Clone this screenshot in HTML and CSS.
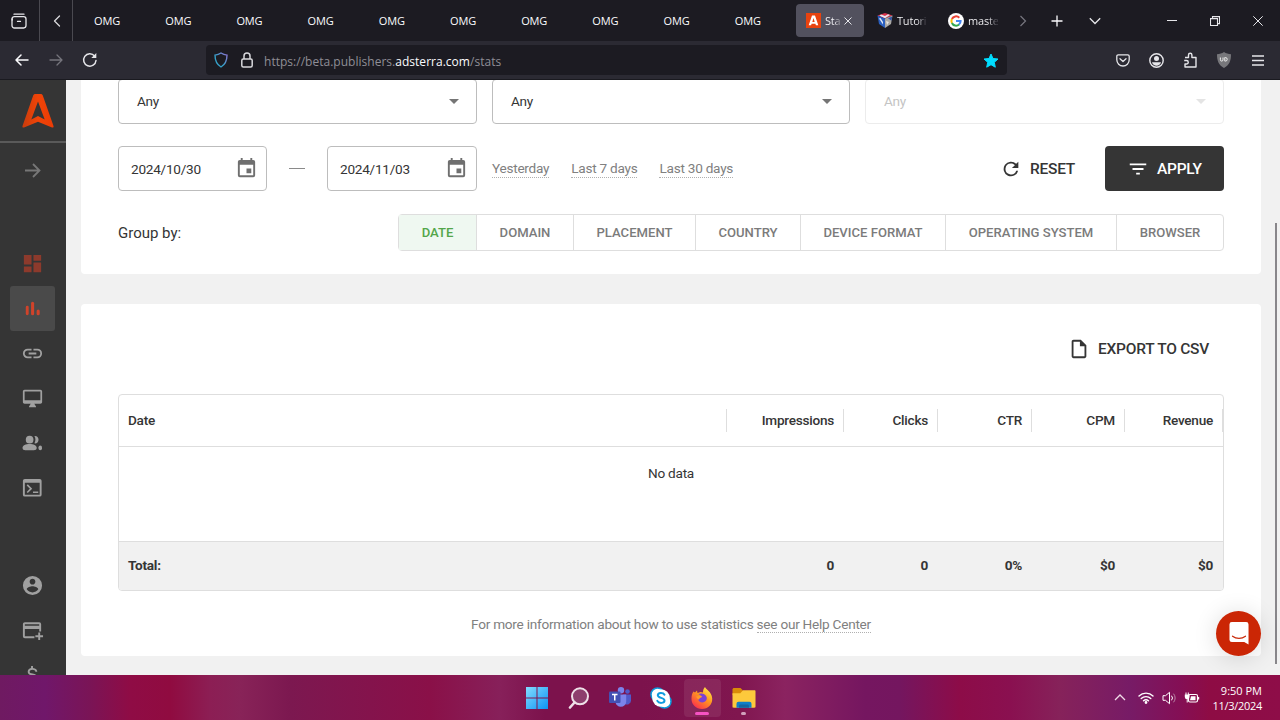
FILE: index.html
```html
<!DOCTYPE html>
<html lang="en">
<head>
    <meta charset="UTF-8">
    <meta name="viewport" content="width=device-width, initial-scale=1.0">
    <title>Statistics</title>
    <link rel="stylesheet" href="styles.css">
</head>
<body>
    <!-- Browser tabs -->
    <div class="tab-bar">
        <div class="tab-tool tool-box">
            <svg width="16" height="16" viewBox="0 0 16 16" fill="none" stroke="#e6e6ea" stroke-width="1.3" stroke-linecap="round"><path d="M3 1.2h10"/><rect x="1" y="3.6" width="14" height="11.4" rx="2.4"/><path d="M1.2 7V6M6.5 8.4h3"/></svg>
        </div>
        <div class="tab-tool tool-back">
            <svg width="8" height="12" viewBox="0 0 8 12" fill="none" stroke="#d8d8dc" stroke-width="1.3" stroke-linecap="round" stroke-linejoin="round"><path d="M6.5 1L1.5 6l5 5"/></svg>
        </div>
        <div class="tabs">
            <span class="tab">OMG</span>
            <span class="tab">OMG</span>
            <span class="tab">OMG</span>
            <span class="tab">OMG</span>
            <span class="tab">OMG</span>
            <span class="tab">OMG</span>
            <span class="tab">OMG</span>
            <span class="tab">OMG</span>
            <span class="tab">OMG</span>
            <span class="tab">OMG</span>
        </div>
        <div class="tab-active">
            <svg width="15" height="15" viewBox="0 0 15 15"><rect width="15" height="15" fill="#e8430f"/><path d="M6 2.500h3L12.300 12.300H9.900l-.5-1.600H5.600l-.5 1.600H2.700z" fill="#fff"/><path d="M7.500 5l1.200 4H6.300z" fill="#e8430f"/></svg>
            <span class="tab-title short">Sta</span>
            <svg width="8" height="8" viewBox="0 0 8 8" stroke="#e6e6ea" stroke-width="1"><path d="M.5.5l7 7M7.500.5l-7 7"/></svg>
        </div>
        <div class="tab-icon">
            <svg width="16" height="15" viewBox="0 0 16 15"><path d="M8 0l7.500 2.500L8 5.500.5 2.500z" fill="#d8324a"/><path d="M4 1.500l4 1.400 3-1.600 2 .6-5 3.400-5.500-2.600z" fill="#e4e6ee"/><path d="M.5 2.500L8 5.500V15l-6-4z" fill="#2a5fc0"/><path d="M2 5.500l4 6V9L3.500 5z" fill="#dfe8f6"/><path d="M15.500 2.500L8 5.500V15l6-4z" fill="#a9a8a6"/><path d="M15.300 3.500L11 5.200l3.500 2.500z" fill="#3554a0"/><path d="M9 8l3 1-2 3z" fill="#e6e4df"/></svg>
            <span class="tab-title">Tutori</span>
        </div>
        <div class="tab-icon">
            <svg width="16" height="16" viewBox="0 0 16 16" fill="none" stroke-width="2"><circle cx="8" cy="8" r="8" fill="#fff"/><path d="M11.300 4.700A4.600 4.600 0 0 0 3.900 6" stroke="#ea4335"/><path d="M3.900 6a4.600 4.600 0 0 0 0 4" stroke="#fbbc05"/><path d="M3.900 10a4.600 4.600 0 0 0 7.200 1.500" stroke="#34a853"/><path d="M11 11.500A4.600 4.600 0 0 0 12.600 8H8" stroke="#4285f4"/></svg>
            <span class="tab-title">maste</span>
        </div>
        <div class="tab-controls">
            <svg width="8" height="12" viewBox="0 0 8 12" fill="none" stroke="#77767f" stroke-width="1.2"><path d="M1.500 1l5 5-5 5"/></svg>
            <svg width="12" height="12" viewBox="0 0 12 12" stroke="#fbfbfe" stroke-width="1.300"><path d="M6 .5v11M.5 6h11"/></svg>
            <svg width="12" height="8" viewBox="0 0 12 8" fill="none" stroke="#e6e6ea" stroke-width="1.300"><path d="M.8 1.300L6 6.500l5.200-5.200"/></svg>
        </div>
        <div class="window-controls">
            <svg width="10" height="10" viewBox="0 0 10 10" stroke="#e6e6ea"><path d="M0 4.500h10"/></svg>
            <svg width="10" height="10" viewBox="0 0 10 10" fill="none" stroke="#e6e6ea" stroke-width="1.100"><path d="M.5 2.600h7v7h-7z"/><path d="M2.500 2.500V.6h7v7h-2"/></svg>
            <svg width="10" height="10" viewBox="0 0 10 10" stroke="#e6e6ea"><path d="M.3.3l9.400 9.400M9.700.3L.3 9.700"/></svg>
        </div>
    </div>

    <!-- Browser toolbar -->
    <div class="toolbar">
        <div class="nav-buttons">
            <svg width="14" height="12" viewBox="0 0 14 12" fill="none" stroke="#fbfbfe" stroke-width="1.500" stroke-linecap="round" stroke-linejoin="round"><path d="M13 6H1M6 1L1 6l5 5"/></svg>
            <svg width="14" height="12" viewBox="0 0 14 12" fill="none" stroke="#75747c" stroke-width="1.300" stroke-linecap="round" stroke-linejoin="round"><path d="M1 6h12M8 1l5 5-5 5"/></svg>
            <svg width="16" height="16" viewBox="0 0 16 16" fill="none" stroke="#e6e6ea" stroke-width="1.500" stroke-linecap="round"><path d="M14 8.500A6.200 6.200 0 1 1 12.600 4"/><path d="M14.300 1v5H9.300z" fill="#e6e6ea" stroke="none"/></svg>
        </div>
        <div class="url-bar">
            <svg width="14" height="16" viewBox="0 0 14 16" fill="none" stroke-width="1.400"><defs><linearGradient id="shield" x1="0" y1="1" x2="1" y2="0"><stop offset="0.400" stop-color="#35a0c8"/><stop offset="1" stop-color="#9070d0"/></linearGradient></defs><path d="M7 1c2 1.300 4 1.900 6 2.100C13 8.500 11.500 12.500 7 15 2.500 12.500 1 8.500 1 3.100 3 2.900 5 2.300 7 1z" stroke="url(#shield)"/></svg>
            <svg class="lock" width="12" height="16" viewBox="0 0 12 16" fill="none" stroke="#d8d8dc" stroke-width="1.500"><rect x=".8" y="7" width="10.400" height="8" rx="1.500"/><path d="M3 7V4a3 3 0 0 1 6 0v3"/></svg>
            <span class="url">https://beta.publishers.<b>adsterra.com</b>/stats</span>
            <svg width="16" height="15" viewBox="0 0 16 15" fill="#00ddff" stroke="#00ddff" stroke-linejoin="round"><path d="M8 1l2 4.500 5 .5-3.700 3.300 1 4.900L8 11.700l-4.300 2.500 1-4.900L1 6l5-.5z"/></svg>
        </div>
        <div class="toolbar-icons">
            <svg width="14" height="13" viewBox="0 0 14 13" fill="none" stroke="#e6e6ea" stroke-width="1.300" stroke-linecap="round" stroke-linejoin="round"><path d="M2.200.8h9.600c.8 0 1.400.6 1.400 1.400v3.600a6.200 6.200 0 0 1-12.400 0V2.200C.8 1.400 1.400.8 2.200.8z"/><path d="M4 4.800l3 2.800 3-2.800"/></svg>
            <svg width="15" height="15" viewBox="0 0 15 15"><circle cx="7.500" cy="7.500" r="6.700" fill="none" stroke="#e6e6ea" stroke-width="1.400"/><circle cx="7.500" cy="5.500" r="2.500" fill="#e6e6ea"/><path d="M3 9.200h9c-.5 2.200-2.400 3.600-4.500 3.600S3.500 11.400 3 9.200z" fill="#e6e6ea"/></svg>
            <svg width="15" height="16" viewBox="0 0 15 16" fill="none" stroke="#e6e6ea" stroke-width="1.400" stroke-linejoin="round"><path d="M2 5.500h3.500V3a1.700 1.700 0 0 1 3.400 0v2.500H13V15H2v-3h1.500a1.600 1.600 0 0 0 0-3.500H1.200"/></svg>
            <svg width="14" height="16" viewBox="0 0 14 16"><path d="M7 0c2 1.400 4.500 2 7 2.200C14 8.500 12.500 13 7 16 1.500 13 0 8.500 0 2.200 2.500 2 5 1.400 7 0z" fill="#77777b"/><path d="M3.400 5.500v2.300a1.300 1.300 0 0 0 2.600 0V5.500M7.800 5.500v3.600h.6a1.800 1.800 0 0 0 0-3.600z" fill="none" stroke="#eee"/></svg>
            <svg class="hamburger" width="12" height="11" viewBox="0 0 12 11" stroke="#e6e6ea" stroke-width="1.300"><path d="M0 1h12M0 5.500h12M0 10h12"/></svg>
        </div>
    </div>

    <!-- Site -->
    <div class="page">
        <aside class="sidebar">
            <div class="logo">
                <svg width="32" height="34" viewBox="0 0 32 34"><defs><linearGradient id="logo" x1="0" y1="0" x2="1" y2="0"><stop offset="0" stop-color="#c93c0c"/><stop offset="0.500" stop-color="#f04408"/><stop offset="1" stop-color="#ea3c06"/></linearGradient></defs><path fill="url(#logo)" fill-rule="evenodd" d="M13.500 0h5c1.300 0 2 .6 2.400 1.700L31.500 32c.3 1.200-.4 1.900-1.500 1.500l-14-5.700L2 33.500c-1.100.4-1.800-.3-1.500-1.500L11.100 1.700C11.500.6 12.200 0 13.500 0zM16 7.500L9.300 25.500 16 22l6.700 3.500z"/></svg>
            </div>
            <div class="expand">
                <svg width="16" height="15" viewBox="0 0 16 15" fill="none" stroke="#777" stroke-width="1.800"><path d="M0 7.500h14M8 1l6.500 6.500L8 14"/></svg>
            </div>
            <nav class="menu">
                <a class="menu-item home"><svg viewBox="0 0 24 24"><path d="M13 3v6h8V3M13 21h8V11h-8M3 21h8v-6H3M3 13h8V3H3z"/></svg></a>
                <a class="menu-item active"><svg viewBox="0 0 24 24"><rect x="5" y="9" width="3" height="10" rx="1.500"/><rect x="10.500" y="5" width="3.200" height="14" rx="1.600"/><rect x="16.300" y="13" width="3.200" height="6" rx="1.600"/></svg></a>
                <a class="menu-item"><svg viewBox="0 0 24 24"><path d="M3.900 12c0-1.710 1.390-3.100 3.100-3.100h4V7H7a5 5 0 0 0 0 10h4v-1.900H7c-1.710 0-3.100-1.390-3.100-3.100M8 13h8v-2H8v2m9-6h-4v1.900h4a3.100 3.100 0 0 1 0 6.200h-4V17h4a5 5 0 0 0 0-10z"/></svg></a>
                <a class="menu-item"><svg class="small" viewBox="0 0 24 24"><path d="M21 2H3c-1.100 0-2 .9-2 2v12c0 1.100.9 2 2 2h7l-2 3v1h8v-1l-2-3h7c1.100 0 2-.9 2-2V4c0-1.100-.9-2-2-2zm0 12H3V4h18v10z"/></svg></a>
                <a class="menu-item"><svg viewBox="0 0 24 24"><circle cx="9" cy="8" r="4"/><path d="M4.500 19C3 19 1.600 18.500 1.600 16.500c0-2.500 3.400-3.900 7.400-3.900s7.400 1.400 7.400 3.900c0 2-1.400 2.500-2.900 2.500zM14 4.200c2.300-.5 4.300 1.400 4.300 3.800s-2 4.300-4.300 3.800c1.400-2.300 1.400-5.300 0-7.600z"/><rect x="18.300" y="14" width="3.600" height="5" rx="1.800"/></svg></a>
                <a class="menu-item"><svg viewBox="0 0 24 24"><path fill-rule="evenodd" d="M4 3h15.500a2 2 0 0 1 2 2v14.500a2 2 0 0 1-2 2H4a2 2 0 0 1-2-2V5a2 2 0 0 1 2-2zm0 4v12.500h15.500V7z"/><path d="M6.500 9.200l4 4-4 4M12.500 17H18" fill="none" stroke="#a0a0a0" stroke-width="1.700"/></svg></a>
                <a class="menu-item account"><svg viewBox="0 0 24 24"><path d="M12 2a10 10 0 1 0 0 20 10 10 0 0 0 0-20zm0 3c1.660 0 3 1.340 3 3s-1.340 3-3 3-3-1.340-3-3 1.340-3 3-3zm0 14.200c-2.500 0-4.710-1.280-6-3.220.03-1.990 4-3.080 6-3.080s5.970 1.090 6 3.080c-1.290 1.940-3.500 3.220-6 3.220z"/></svg></a>
                <a class="menu-item"><svg viewBox="0 0 24 24"><path d="M4 3.500h15a2 2 0 0 1 2 2V13h-2v-2.500H4V18h10v2H4a2 2 0 0 1-2-2V5.500c0-1.100.9-2 2-2zm0 2V7h15V5.500zM18 14h2v3h3v2h-3v3h-2v-3h-3v-2h3z" fill-rule="evenodd"/></svg></a>
                <a class="menu-item dollar"><svg viewBox="0 0 24 24"><path d="M7 15h2c0 1.080 1.370 2 3 2s3-.92 3-2c0-1.100-1.040-1.500-3.240-2.030C9.640 12.440 7 11.780 7 9c0-1.790 1.470-3.310 3.500-3.820V3h2v2.180C15.530 5.690 17 7.210 17 9h-2c0-1.080-1.370-2-3-2s-3 .92-3 2c0 1.100 1.040 1.500 3.240 2.030C14.360 11.560 17 12.220 17 15c0 1.790-1.470 3.310-3.500 3.820V21h-3v-2.180C8.470 18.310 7 16.790 7 15z"/></svg></a>
            </nav>
        </aside>

        <main class="content">
            <section class="card filters">
                <div class="select-row">
                    <div class="select"><span>Any</span><i class="caret"></i></div>
                    <div class="select"><span>Any</span><i class="caret"></i></div>
                    <div class="select disabled"><span>Any</span><i class="caret"></i></div>
                </div>
                <div class="date-row">
                    <div class="date-input from"><span>2024/10/30</span><svg viewBox="0 0 24 24"><path d="M19 19H5V8h14M16 1v2H8V1H6v2H5a2 2 0 0 0-2 2v14a2 2 0 0 0 2 2h14a2 2 0 0 0 2-2V5a2 2 0 0 0-2-2h-1V1M17 12h-5v5h5v-5z"/></svg></div>
                    <span class="dash"></span>
                    <div class="date-input"><span>2024/11/03</span><svg viewBox="0 0 24 24"><path d="M19 19H5V8h14M16 1v2H8V1H6v2H5a2 2 0 0 0-2 2v14a2 2 0 0 0 2 2h14a2 2 0 0 0 2-2V5a2 2 0 0 0-2-2h-1V1M17 12h-5v5h5v-5z"/></svg></div>
                    <div class="presets">
                        <a class="dotted">Yesterday</a>
                        <a class="dotted">Last 7 days</a>
                        <a class="dotted">Last 30 days</a>
                    </div>
                    <button class="btn reset"><svg viewBox="0 0 24 24"><path d="M17.650 6.350A8 8 0 1 0 19.730 14h-2.080A6 6 0 1 1 12 6c1.660 0 3.140.69 4.220 1.780L13 11h7V4l-2.350 2.350z"/></svg>RESET</button>
                    <button class="btn apply"><svg viewBox="0 0 24 24"><path d="M6 13h12v-2H6M3 6v2h18V6M10 18h4v-2h-4v2z"/></svg>APPLY</button>
                </div>
                <div class="group-row">
                    <span class="group-label">Group by:</span>
                    <div class="group-buttons">
                        <button class="group-btn g-date selected">DATE</button>
                        <button class="group-btn g-domain">DOMAIN</button>
                        <button class="group-btn g-placement">PLACEMENT</button>
                        <button class="group-btn g-country">COUNTRY</button>
                        <button class="group-btn g-format">DEVICE FORMAT</button>
                        <button class="group-btn g-system">OPERATING SYSTEM</button>
                        <button class="group-btn g-browser">BROWSER</button>
                    </div>
                </div>
            </section>

            <section class="card report">
                <button class="btn export"><svg viewBox="0 0 24 24"><path d="M14 2H6c-1.100 0-2 .9-2 2v16c0 1.100.9 2 2 2h12c1.100 0 2-.9 2-2V8l-6-6zM6 20V4h7v5h5v11H6z"/></svg>EXPORT TO CSV</button>
                <div class="table">
                    <div class="table-row table-head">
                        <span>Date</span><span>Impressions</span><span>Clicks</span><span>CTR</span><span>CPM</span><span>Revenue</span>
                    </div>
                    <div class="table-empty">No data</div>
                    <div class="table-row table-total">
                        <span>Total:</span><span>0</span><span>0</span><span>0%</span><span>$0</span><span>$0</span>
                    </div>
                </div>
                <p class="help">For more information about how to use statistics <a class="dotted">see our Help Center</a></p>
            </section>
        </main>
        <div class="scrollbar"></div>
        <div class="chat">
            <svg width="20" height="23" viewBox="0 0 21 24"><path d="M3 0h15a2.500 2.500 0 0 1 2.500 2.500V23.500L16 21H3a2.500 2.500 0 0 1-2.500-2.500v-16A2.500 2.500 0 0 1 3 0z" fill="#fff"/><path d="M3.700 14.800c4 3.200 9.600 3.200 13.600 0" fill="none" stroke="#c92a0a" stroke-width="1.300" stroke-linecap="round"/></svg>
        </div>
    </div>

    <!-- Taskbar -->
    <footer class="taskbar">
        <div class="apps">
            <div class="app">
                <svg width="22" height="22" viewBox="0 0 22 22"><defs><linearGradient id="win" x1="0" y1="0" x2="1" y2="1"><stop offset="0" stop-color="#84dcff"/><stop offset="1" stop-color="#0c94f4"/></linearGradient></defs><path fill="url(#win)" d="M0 0h10.500v10.500H0zM11.500 0H22v10.500H11.500zM0 11.500h10.500V22H0zM11.500 11.500H22V22H11.500z"/></svg>
            </div>
            <div class="app">
                <svg width="22" height="22" viewBox="0 0 22 22"><circle cx="12" cy="9.300" r="8" fill="#8d3e6d" stroke="#eee0e8" stroke-width="2"/><path d="M6.500 15.500L2 20.500" stroke="#eee0e8" stroke-width="2.600" stroke-linecap="round"/></svg>
            </div>
            <div class="app">
                <svg width="24" height="20" viewBox="0 0 24 20"><circle cx="19.500" cy="4.500" r="2.300" fill="#5059c9"/><path d="M15 7.500h8v6a4 4 0 0 1-6 3.400z" fill="#5059c9"/><circle cx="13" cy="3.200" r="3.200" fill="#7b83eb"/><path d="M7.500 7.500h10.700v7a5.300 5.300 0 0 1-10.700 0z" fill="#7b83eb"/><rect x="1" y="4.500" width="11.500" height="11.500" rx="1" fill="#4350b4"/><path d="M4 7.500h5.500M6.750 7.500v6" stroke="#fff" stroke-width="1.500"/></svg>
            </div>
            <div class="app">
                <svg width="22" height="22" viewBox="0 0 22 22"><circle cx="7.500" cy="7.500" r="6.500" fill="#fff" stroke="#0d9bdc" stroke-width="1.500"/><circle cx="14.500" cy="14.500" r="6.500" fill="#fff" stroke="#0d9bdc" stroke-width="1.500"/><circle cx="11" cy="11" r="8.800" fill="#fff"/><path d="M14.500 7.700c-1.300-2.400-6.700-2.300-6.700.6 0 3.200 6.700 2 6.700 5.200 0 3-5.700 3.200-7.200.4" fill="none" stroke="#109ce0" stroke-width="2" stroke-linecap="round"/></svg>
            </div>
            <div class="app running">
                <svg width="22" height="22" viewBox="0 0 22 22"><defs><linearGradient id="fox" x1="0.900" y1="0" x2="0.200" y2="1"><stop offset="0" stop-color="#fff44f"/><stop offset="0.450" stop-color="#ff9a1f"/><stop offset="1" stop-color="#fb2a50"/></linearGradient></defs><path fill="url(#fox)" d="M14 0c1 3 6.800 4.500 7.200 11.500C21.500 17.500 17 22 11 22S.5 17.500.5 12C.5 8.500 1 6.500 2.500 4.500L4 5.500l2-2 .5 2.500 3-1 2.500.5c0-2.200.5-4 2-5.500z"/><path d="M7.500 7c2-1 7.300-.8 8.200 3.600.8 4-4.200 6.400-7.200 3.900-1.300-1.100-1.600-2.200-1-3.500l3-.7-.9-1.800z" fill="#7a42d4"/><path d="M5 9.500l4.500-.8c1 .2 1.700.8 1.700 1.300-1.700.3-3 1.200-3.200 2.800-1-.6-2.200-1.700-3-3.300z" fill="#ff9b2a"/></svg>
            </div>
            <div class="app opened">
                <svg width="24" height="22" viewBox="0 0 24 22"><path d="M2 1h6.500L11 3.500V8H.5V2.500C.5 1.700 1.200 1 2 1z" fill="#d98b08"/><path d="M11 3.200h11.500c.6 0 1 .4 1 1v15.300c0 .8-.4 1.200-1.200 1.200H1.700c-.8 0-1.200-.4-1.200-1.200V6.200h7.800z" fill="#fdc93c"/><path d="M6.500 14.700h11a2 2 0 0 1 2 2v4h-15v-4a2 2 0 0 1 2-2z" fill="#0f7fc8"/><path d="M8.500 17.500h7c.8 0 1.500.7 1.500 1.500v1.700H7V19c0-.8.700-1.500 1.500-1.500z" fill="#1465a0"/></svg>
            </div>
        </div>
        <div class="tray">
            <svg width="12" height="7" viewBox="0 0 12 7" fill="none" stroke="#f0dce8" stroke-width="1.300"><path d="M1 6l5-5 5 5"/></svg>
            <svg width="16" height="12" viewBox="0 0 16 12" fill="none" stroke="#fff" stroke-width="1.400" stroke-linecap="round"><path d="M1 4a10 10 0 0 1 14 0M3.200 6.500a7 7 0 0 1 9.600 0M5.500 8.700a4 4 0 0 1 5 0"/><circle cx="8" cy="10.500" r=".7" fill="#fff"/></svg>
            <svg width="15" height="14" viewBox="0 0 15 14" fill="none" stroke="#fff"><path d="M1 4.700h2.500L7.500 1.300v11.400L3.500 9.300H1z"/><path d="M9.500 4.700a3.500 3.500 0 0 1 0 4.600"/><path d="M11.500 2.700a6.500 6.500 0 0 1 0 8.600" stroke="#b984a4"/></svg>
            <svg width="16" height="12" viewBox="0 0 16 12"><rect x="4.500" y="2.500" width="9" height="7.500" rx="1.500" fill="none" stroke="#fff" stroke-width="1.200"/><path d="M7 4.300h4.500v4H6zM14 5h1.200v2.600H14z" fill="#fff"/><path d="M.8 2.500h4.700V5a2.300 2.300 0 0 1-4.700 0zM1.500.5h1v2h-1zM3.800.5h1v2h-1zM2.700 7h1v3.500h-1z" fill="#fff"/></svg>
        </div>
        <div class="clock"><span class="time">9:50 PM</span><span>11/3/2024</span></div>
    </footer>
</body>
</html>
```
FILE: styles.css
```css
/* General Styles */
* {
    box-sizing: border-box;
}

body {
    margin: 0;
    width: 1280px;
    height: 720px;
    overflow: hidden;
    display: flex;
    flex-direction: column;
    font-family: Roboto, Arial, sans-serif;
    font-size: 13.6px;
    color: #353535;
}

svg {
    display: block;
    flex-shrink: 0;
}

button {
    font-family: inherit;
    border: none;
    background: none;
    padding: 0;
    cursor: pointer;
}

/* Tab Bar */
.tab-bar {
    height: 41px;
    flex-shrink: 0;
    background-color: #1c1b22;
    display: flex;
    align-items: center;
    font-family: "Open Sans", "Noto Sans", sans-serif;
    font-size: 11px;
    color: #fbfbfe;
}

.tab-tool {
    height: 41px;
    display: flex;
    align-items: center;
    border-right: 1px solid #4a4950;
}

.tool-box {
    width: 40px;
    padding-left: 11px;
}

.tool-back {
    width: 33px;
    padding-left: 13px;
}

.tabs {
    display: flex;
    padding-left: 21px;
    width: 723px;
}

.tab {
    width: 71.2px;
    flex-shrink: 0;
    letter-spacing: -0.1px;
}

.tab-active {
    width: 68px;
    height: 33px;
    border-radius: 4px;
    background-color: #52515e;
    display: flex;
    align-items: center;
    padding-left: 10px;
}

.tab-title {
    width: 30px;
    margin-left: 4px;
    letter-spacing: -0.2px;
    white-space: nowrap;
    color: transparent;
    background: linear-gradient(to right, #fbfbfe 65%, #45444c 95%);
    -webkit-background-clip: text;
    background-clip: text;
}

.tab-title.short {
    width: 19px;
    background-image: linear-gradient(to right, #fbfbfe 45%, #66656f 90%);
}

.tab-icon {
    display: flex;
    align-items: center;
    width: 71px;
    padding-left: 13px;
}

.tab-controls {
    display: flex;
    align-items: center;
    gap: 26px;
    padding-left: 13px;
    width: 161px;
}

.tab-controls svg:first-child {
    margin-right: -2.5px;
}

.window-controls {
    display: flex;
    gap: 33px;
}

/* Toolbar */
.toolbar {
    height: 39px;
    flex-shrink: 0;
    background-color: #2b2a33;
    border-bottom: 1px solid #1a1a20;
    display: flex;
    align-items: center;
}

.nav-buttons {
    width: 206px;
    display: flex;
    align-items: center;
    gap: 19.5px;
    padding-left: 15px;
}

.url-bar {
    width: 801px;
    height: 30px;
    border-radius: 4px;
    background-color: #1c1b22;
    display: flex;
    align-items: center;
    padding: 0 8px;
}

.lock {
    margin-left: 13px;
}

.url {
    flex: 1;
    margin-left: 11px;
    padding-top: 2px;
    font-family: "Open Sans", "Noto Sans", sans-serif;
    font-size: 12px;
    letter-spacing: 0.02px;
    color: #8f8e96;
}

.url b {
    font-weight: normal;
    color: #fbfbfe;
}

.toolbar-icons {
    display: flex;
    align-items: center;
    gap: 19px;
    padding-left: 109px;
}

.hamburger {
    margin-left: 2px;
}

/* Page */
.page {
    position: relative;
    flex: 1;
    min-height: 0;
    display: flex;
    background-color: #f1f1f1;
    overflow: hidden;
    letter-spacing: -0.25px;
}

/* Sidebar */
.sidebar {
    width: 66px;
    flex-shrink: 0;
    background-color: #353535;
}

.logo {
    height: 63px;
    padding: 14px 0 0 22px;
    border-bottom: 2px solid #5a5a5a;
}

.expand {
    height: 98px;
    padding: 19.5px 0 0 25px;
}

.menu-item {
    width: 45px;
    height: 44.9px;
    margin-left: 10px;
    border-radius: 3px;
    display: flex;
    align-items: center;
    justify-content: center;
}

.menu-item svg {
    width: 23px;
    height: 23px;
    fill: #a0a0a0;
}

.menu-item svg.small {
    width: 21px;
    height: 21px;
}

.menu-item.home svg {
    fill: #8d3a2c;
}

.menu-item.active {
    background-color: #4a4a4a;
}

.menu-item.active svg {
    fill: #d0432a;
}

.menu-item.account {
    margin-top: 53px;
}

.menu-item.dollar {
    height: 42px;
}

/* Cards */
.content {
    padding-left: 15px;
}

.card {
    width: 1180px;
    background-color: #ffffff;
    border-radius: 4px;
    padding: 0 37px;
}

.filters {
    height: 195px;
    margin-top: -1px;
    border-radius: 0 0 4px 4px;
}

.select-row {
    display: grid;
    grid-template-columns: 359px 358px 359px;
    gap: 15px;
}

.select {
    height: 45px;
    border: 1px solid #bdbdbd;
    border-radius: 4px;
    display: flex;
    align-items: center;
    justify-content: space-between;
    padding: 0 17px 1px 18px;
}

.select.disabled {
    color: #c4c4c4;
    border-color: #ececec;
}

.caret {
    border: 5px solid transparent;
    border-top-color: #757575;
    border-bottom: none;
}

.disabled .caret {
    border-top-color: #e4e4e4;
}

.date-row {
    display: flex;
    align-items: center;
    height: 45px;
    margin-top: 22px;
}

.date-input {
    width: 150px;
    height: 45px;
    border: 1px solid #bdbdbd;
    border-radius: 4px;
    display: flex;
    align-items: center;
    justify-content: space-between;
    padding: 0 8px 0 12px;
}

.date-input.from {
    width: 149px;
}

.date-input svg {
    width: 23px;
    height: 23px;
    fill: #6f6f6f;
}

.dash {
    width: 16px;
    height: 1px;
    margin: 0 22px;
    background-color: #8a8a8a;
}

.presets {
    flex: 1;
    display: flex;
    gap: 22px;
    margin-left: 15px;
    padding-top: 2px;
    color: #808080;
}

.presets .dotted {
    line-height: 15px;
}

.dotted {
    padding-bottom: 1px;
    border-bottom: 1px dotted #b0b0b0;
}

.help .dotted {
    padding-bottom: 0;
}

.btn {
    display: flex;
    align-items: center;
    font-size: 15.5px;
    font-weight: 500;
    letter-spacing: -0.25px;
    color: #353535;
}

.btn svg {
    width: 22px;
    height: 22px;
    fill: currentColor;
}

.reset {
    gap: 8px;
    margin-right: 30px;
}

.apply {
    width: 119px;
    height: 45px;
    gap: 8px;
    padding-left: 22px;
    border-radius: 4px;
    background-color: #353535;
    color: #ffffff;
}

.group-row {
    display: flex;
    align-items: center;
    justify-content: space-between;
    height: 37px;
    margin-top: 23px;
}

.group-label {
    padding-top: 1px;
    font-size: 15px;
    letter-spacing: 0;
}

.group-buttons {
    display: flex;
    height: 37px;
    border: 1px solid #dedede;
    border-radius: 4px;
}

.group-btn {
    font-size: 13.1px;
    font-weight: 500;
    color: #7b7b7b;
    border-right: 1px solid #dedede;
}

.group-btn:last-child {
    border-right: none;
}

.group-btn.selected {
    background-color: #eff8f1;
    color: #53a64a;
}

.g-date {
    width: 78px;
}

.g-domain {
    width: 97px;
}

.g-placement {
    width: 122px;
}

.g-country {
    width: 105px;
}

.g-format {
    width: 145px;
}

.g-system {
    width: 171px;
}

.g-browser {
    width: 106px;
}

/* Report */
.report {
    height: 352px;
    margin-top: 30px;
    padding-top: 34px;
}

.export {
    height: 22px;
    gap: 8px;
    margin: 0 15px 0 auto;
}

.table {
    height: 197px;
    margin-top: 34px;
    border: 1px solid #dedede;
    border-radius: 4px;
    overflow: hidden;
}

.table-row {
    display: grid;
    grid-template-columns: 608px 117px 94px 94px 93px 98px;
    align-items: center;
    text-align: right;
}

.table-row span {
    line-height: 23px;
    padding-right: 9px;
}

.table-row span:first-child {
    text-align: left;
    padding-left: 9px;
}

.table-head {
    height: 52px;
    font-weight: 500;
    border-bottom: 1px solid #dedede;
}

.table-head span {
    border-right: 1px solid #dedede;
}

.table-empty {
    height: 94px;
    padding-top: 18px;
    text-align: center;
}

.table-total {
    height: 49px;
    padding-bottom: 2px;
    background-color: #f1f1f1;
    border-top: 1px solid #dedede;
    font-weight: 700;
}

.table-total span {
    padding-right: 10px;
}

.help {
    margin: 24.5px 0 0;
    text-align: center;
    color: #808080;
}

/* Overlays */
.scrollbar {
    position: absolute;
    top: 143px;
    right: 3px;
    width: 2px;
    height: 441px;
    background-color: #88868a;
}

.chat {
    position: absolute;
    top: 531px;
    left: 1216px;
    width: 45px;
    height: 45px;
    border-radius: 50%;
    background-color: #cb2605;
    box-shadow: 0 2px 24px rgba(0, 0, 0, 0.14);
    display: flex;
    align-items: center;
    justify-content: center;
}

/* Taskbar */
.taskbar {
    height: 45px;
    flex-shrink: 0;
    display: flex;
    align-items: center;
    background: linear-gradient(to right, #6f1a61 0, #70176a 45px, #7a1456 90px, #8f0c45 130px, #900b40 170px, #8c1e54 210px, #882358 240px, #7c1850 290px, #84134c 370px, #8a1048 430px, #87205a 500px, #7c124c 545px, #7c124c 640px, #80164f 740px, #8b2360 785px, #751660 865px, #74165f 900px, #8d0c48 960px, #8a1050 1010px, #86225a 1060px, #771b66 1130px, #840f55 1180px, #8e0c44 1210px, #8e0d48 1280px);
    font-family: "Open Sans", "Noto Sans", sans-serif;
    font-size: 11px;
    color: #ffffff;
}

.apps {
    display: flex;
    align-items: center;
    gap: 3.8px;
    padding-left: 518.5px;
    width: 1114px;
}

.app {
    width: 37.5px;
    height: 38px;
    border-radius: 4px;
    display: flex;
    flex-direction: column;
    align-items: center;
    padding-top: 8px;
}

.running {
    background-color: rgba(255, 255, 255, 0.08);
}

.running::after,
.opened::after {
    content: "";
    width: 14px;
    height: 3px;
    margin-top: 3px;
    border-radius: 2px;
    background-color: #f653c4;
}

.opened::after {
    width: 5px;
    background-color: #d0a2bc;
}

.tray {
    display: flex;
    align-items: center;
    gap: 7.5px;
    width: 94px;
}

.tray svg:first-child {
    margin-right: 4.5px;
}

.clock {
    width: 54px;
    display: flex;
    flex-direction: column;
    align-items: flex-end;
    line-height: 15px;
    letter-spacing: -0.3px;
}

.time {
    letter-spacing: 0;
}
```
